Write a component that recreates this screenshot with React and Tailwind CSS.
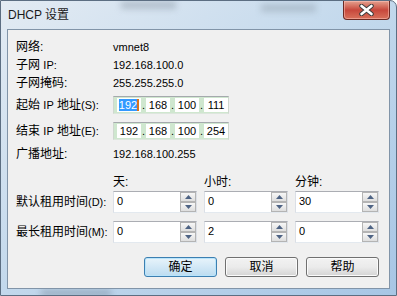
import React from "react";

const FONT = { fontFamily: '"Liberation Sans", "Noto Sans CJK SC", sans-serif' };

function Label({ children }) {
  return (
    <div className="w-[97px] shrink-0 whitespace-nowrap text-[12px] leading-[16px] text-black">
      {children}
    </div>
  );
}

function L({ children }) {
  return <span className="text-[11px]">{children}</span>;
}

function Value({ children }) {
  return <div className="text-[11px] leading-[14px] text-black">{children}</div>;
}

function IpSeg({ v, selected }) {
  return (
    <div className="flex h-[14px] w-[24px] items-center justify-center bg-white text-[11px] text-black">
      {selected ? (
        <span className="flex h-[12px] items-center">
          <span className="bg-[#3399ff] px-0 text-white leading-[12px]">{v}</span>
          <span className="h-[12px] w-[2px] bg-[#d9731c]" />
        </span>
      ) : (
        v
      )}
    </div>
  );
}

function IpBox({ parts, sel }) {
  return (
    <div className="flex h-[18px] w-[116px] items-center border border-t-[#a5a9ad] border-l-[#cfd8cf] border-r-[#cfd8cf] border-b-[#dde6dd] bg-[#cfe7cf] pl-[3px]">
      {parts.map((p, i) => (
        <React.Fragment key={i}>
          {i > 0 && (
            <div className="flex w-[5px] justify-center text-[11px] leading-[14px] text-black">.</div>
          )}
          <IpSeg v={p} selected={sel && i === 0} />
        </React.Fragment>
      ))}
    </div>
  );
}

function Tri({ up }) {
  return (
    <svg width="7" height="4" viewBox="0 0 7 4">
      {up ? (
        <path d="M0 4 L3.5 0 L7 4 Z" fill="#4e6384" />
      ) : (
        <path d="M0 0 L3.5 4 L7 0 Z" fill="#4e6384" />
      )}
    </svg>
  );
}

function SpinBox({ value }) {
  return (
    <div className="flex h-[22px] w-[84px] border border-t-[#abadb3] border-l-[#dbdfe6] border-r-[#dbdfe6] border-b-[#e3e9ef] bg-white">
      <div className="flex-1 pl-[3px] pt-[3px] text-[11px] leading-[13px] text-black">{value}</div>
      <div className="flex w-[16px] flex-col">
        <div className="flex h-[10px] items-center justify-center border border-[#b4b4b4] bg-gradient-to-b from-[#f7f7f7] to-[#dedede]">
          <Tri up />
        </div>
        <div className="flex h-[10px] items-center justify-center border border-[#b4b4b4] bg-gradient-to-b from-[#f7f7f7] to-[#dedede]">
          <Tri />
        </div>
      </div>
    </div>
  );
}

function Btn({ children, def }) {
  return (
    <div
      className={
        "flex h-[20px] w-[73px] items-center justify-center rounded-[3px] border text-[12px] text-black " +
        (def
          ? "border-[#3c7fb1] bg-gradient-to-b from-[#e8f4fb] via-[#d2e8f6] to-[#bcdcf0] shadow-[inset_0_0_0_1px_#b9e4fb]"
          : "border-[#707070] bg-gradient-to-b from-[#f2f2f2] via-[#ebebeb] to-[#d4d4d4] shadow-[inset_0_0_0_1px_#fbfbfb]")
      }
    >
      {children}
    </div>
  );
}

export default function App() {
  return (
    <div
      className="relative h-[296px] w-[397px] overflow-hidden rounded-tr-[7px] border border-[#5c6e82] bg-gradient-to-br from-[#e3ebf3] via-[#c2d8ec] to-[#a7c6e5]"
      style={FONT}
    >
      {/* blurred background glass shapes */}
      <div className="pointer-events-none absolute left-[120px] top-[0px] h-[8px] w-[55px] bg-[#7f8c99]/40 blur-[3px]" />
      <div className="pointer-events-none absolute left-[260px] top-[3px] h-[8px] w-[55px] bg-[#7f8c99]/35 blur-[3px]" />
      <div className="pointer-events-none absolute left-[40px] top-[289px] h-[6px] w-[70px] bg-[#5b6a7a]/40 blur-[3px]" />

      {/* title bar */}
      <div className="relative flex h-[28px] items-start">
        <div className="pl-[7px] pt-[6px] text-[12px] leading-[16px] text-[#1a1a1a]">DHCP 设置</div>
        <div className="ml-auto mr-[6px] flex h-[19px] w-[47px] items-center justify-center rounded-b-[4px] border border-t-0 border-[#6b2a24] bg-gradient-to-b from-[#e3a08f] via-[#c7473c] to-[#d8705b] shadow-[inset_0_0_0_1px_rgba(255,200,190,0.5)]">
          <svg width="17" height="12" viewBox="0 0 17 12">
            <path d="M3.5 2 L13.5 10 M13.5 2 L3.5 10" stroke="#3c3c3c" strokeWidth="4.5" strokeLinecap="round" />
            <path d="M3.5 2 L13.5 10 M13.5 2 L3.5 10" stroke="#ffffff" strokeWidth="2.6" strokeLinecap="round" />
          </svg>
        </div>
      </div>

      {/* client area */}
      <div className="relative mx-[6px] flex h-[260px] flex-col border border-[#8194a8] bg-[#f0f0f0] pl-[8px] pr-[10px]">
        <div className="mt-[8px] flex h-[18px] items-center">
          <Label>网络:</Label>
          <Value>vmnet8</Value>
        </div>
        <div className="flex h-[18px] items-center">
          <Label>子网 <L>IP:</L></Label>
          <Value>192.168.100.0</Value>
        </div>
        <div className="flex h-[18px] items-center">
          <Label>子网掩码:</Label>
          <Value>255.255.255.0</Value>
        </div>
        <div className="mt-[4px] flex h-[18px] items-center">
          <Label>起始 <L>IP</L> 地址<L>(S):</L></Label>
          <IpBox parts={["192", "168", "100", "111"]} sel />
        </div>
        <div className="mt-[8px] flex h-[18px] items-center">
          <Label>结束 <L>IP</L> 地址<L>(E):</L></Label>
          <IpBox parts={["192", "168", "100", "254"]} />
        </div>
        <div className="mt-[5px] flex h-[18px] items-center">
          <Label>广播地址:</Label>
          <Value>192.168.100.255</Value>
        </div>
        <div className="mt-[11px] flex h-[16px] items-center">
          <div className="w-[97px] shrink-0" />
          <div className="flex gap-[7px] text-[12px] leading-[16px] text-black">
            <div className="w-[84px]">天:</div>
            <div className="w-[84px]">小时:</div>
            <div className="w-[84px]">分钟:</div>
          </div>
        </div>
        <div className="mt-[1px] flex h-[22px] items-center">
          <Label>默认租用时间<L>(D):</L></Label>
          <div className="flex gap-[7px]">
            <SpinBox value="0" />
            <SpinBox value="0" />
            <SpinBox value="30" />
          </div>
        </div>
        <div className="mt-[8px] flex h-[22px] items-center">
          <Label>最长租用时间<L>(M):</L></Label>
          <div className="flex gap-[7px]">
            <SpinBox value="0" />
            <SpinBox value="2" />
            <SpinBox value="0" />
          </div>
        </div>
        <div className="mt-[14px] flex justify-end gap-[8px]">
          <Btn def>确定</Btn>
          <Btn>取消</Btn>
          <Btn>帮助</Btn>
        </div>
      </div>
    </div>
  );
}
